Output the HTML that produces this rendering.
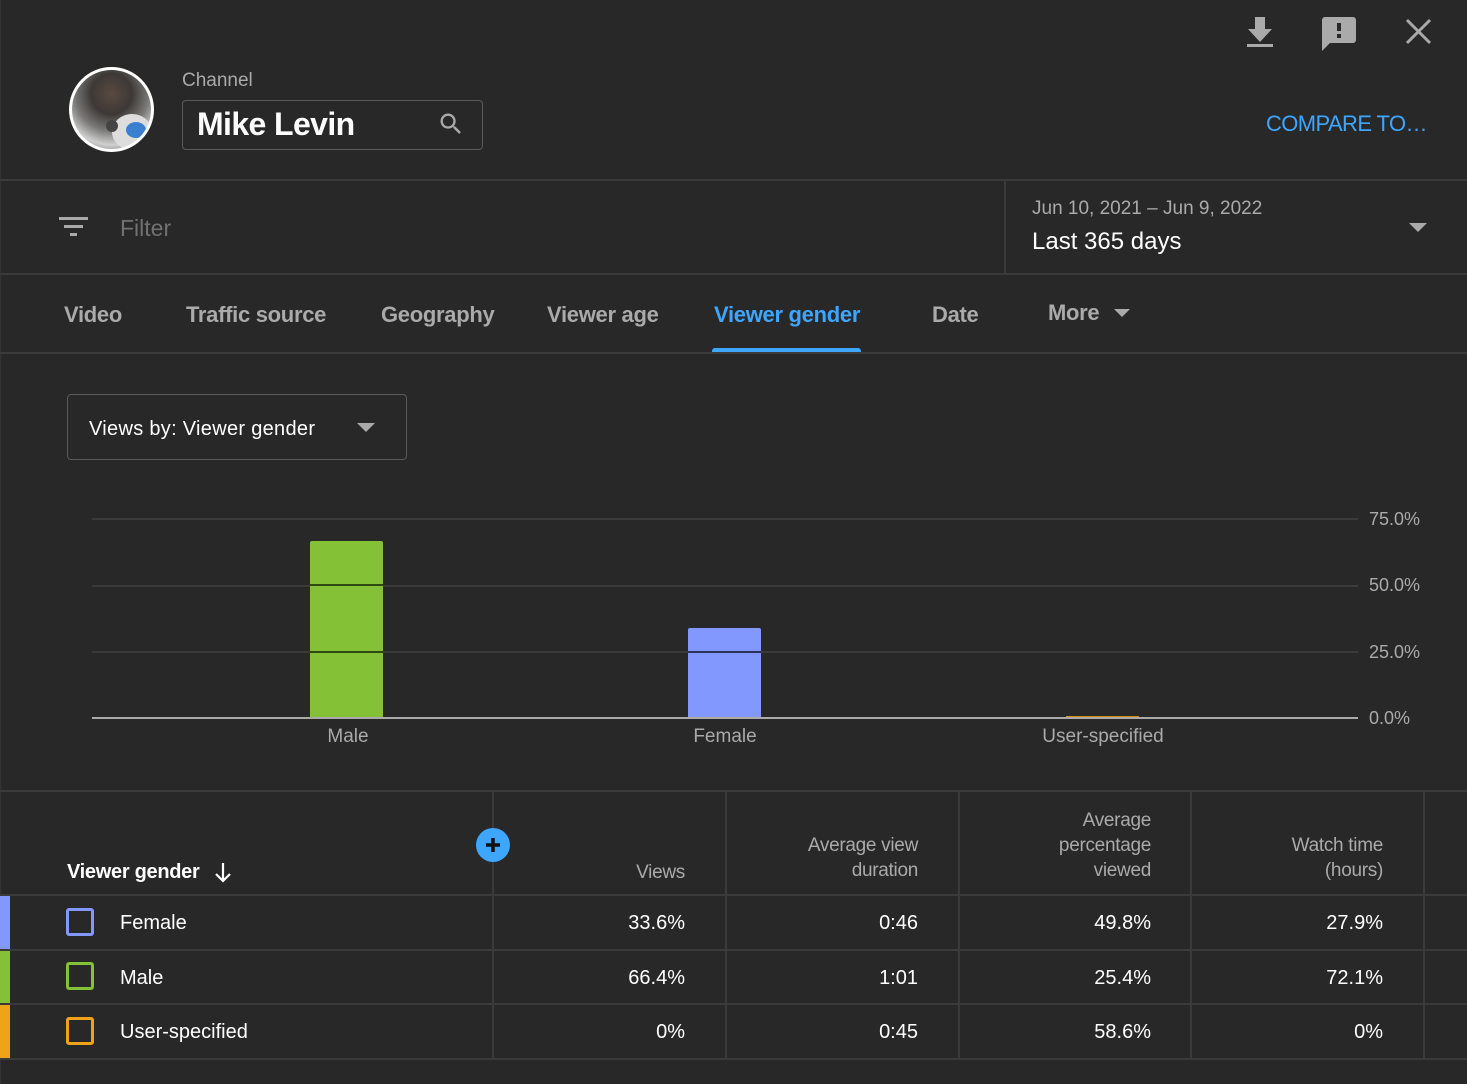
<!DOCTYPE html>
<html><head><meta charset="utf-8">
<style>
*{margin:0;padding:0;box-sizing:border-box}
body{width:1467px;height:1084px;background:#282828;font-family:"Liberation Sans",Arial,sans-serif;position:relative;overflow:hidden;color:#fff}
.a{position:absolute;white-space:nowrap}
.hl{position:absolute;height:2px;background:#3a3a3a}
.vl{position:absolute;width:2px;background:#3a3a3a}
.tab{position:absolute;top:302px;font-size:22px;color:#aaa;font-weight:bold;letter-spacing:-0.3px}
.grid{position:absolute;left:92px;width:1266px;height:2px;background:#3a3a3a}
.yl{position:absolute;left:1369px;font-size:18px;color:#aaa}
.xl{position:absolute;top:726px;font-size:19px;color:#aaa;transform:translateX(-50%)}
.th{position:absolute;font-size:19px;color:#aaa;text-align:right;line-height:25px;letter-spacing:-0.3px}
.td{position:absolute;font-size:20px;color:#fff;text-align:right}
.box{position:absolute;left:66px;width:28px;height:28px;border:3px solid;border-radius:3px}
</style></head><body>
<div class="vl" style="left:0;top:0;height:1084px;background:#333;width:1px"></div>

<!-- avatar -->
<div class="a" style="left:69px;top:67px;width:85px;height:85px;border-radius:50%;border:3px solid #fff;background:radial-gradient(circle at 50% 30%,#5a4a40 0,#3d3836 30%,#7a7a78 55%,#cfcfcf 75%,#555 100%);overflow:hidden">
<div class="a" style="left:40px;top:44px;width:40px;height:36px;border-radius:50%;background:#ddd"></div>
<div class="a" style="left:54px;top:52px;width:20px;height:16px;border-radius:50%;background:#3a7fd0"></div>
<div class="a" style="left:34px;top:50px;width:12px;height:12px;border-radius:50%;background:#444"></div>
</div>
<div class="a" style="left:182px;top:70px;font-size:19px;color:#aaa">Channel</div>
<div class="a" style="left:182px;top:100px;width:301px;height:50px;border:1px solid #5a5a5a;border-radius:4px"></div>
<div class="a" style="left:197px;top:106px;font-size:32px;font-weight:bold;color:#fff;letter-spacing:-0.6px">Mike Levin</div>
<svg class="a" style="left:437px;top:110px" width="28" height="28" viewBox="0 0 24 24"><path fill="#aaa" d="M15.5 14h-.79l-.28-.27A6.47 6.47 0 0 0 16 9.5 6.5 6.5 0 1 0 9.5 16c1.61 0 3.09-.59 4.23-1.57l.27.28v.79l5 4.99L20.49 19l-4.99-5zm-6 0C7.01 14 5 11.99 5 9.5S7.01 5 9.5 5 14 7.01 14 9.5 11.99 14 9.5 14z"/></svg>

<!-- top icons -->
<svg class="a" style="left:1245px;top:15px" width="30" height="34" viewBox="0 0 30 34"><path fill="#aaa" d="M10 2h10v12h7L15 27 3 14h7z"/><rect x="2" y="29" width="26" height="3" fill="#aaa"/></svg>
<svg class="a" style="left:1321px;top:16px" width="36" height="36" viewBox="0 0 36 36"><path fill="#aaa" d="M4 1h28a3 3 0 0 1 3 3v20a3 3 0 0 1-3 3H9l-8 8V4a3 3 0 0 1 3-3z"/><rect x="16" y="7" width="4" height="8" fill="#282828"/><rect x="16" y="18" width="4" height="4" fill="#282828"/></svg>
<svg class="a" style="left:1405px;top:18px" width="27" height="27" viewBox="0 0 27 27"><path stroke="#aaa" stroke-width="3" d="M2 2L25 25M25 2L2 25"/></svg>
<div class="a" style="left:1266px;top:111px;font-size:22px;color:#3ea6ff;letter-spacing:-0.6px">COMPARE TO…</div>

<div class="hl" style="left:0;top:179px;width:1467px"></div>
<!-- filter -->
<svg class="a" style="left:58px;top:217px" width="32" height="22" viewBox="0 0 32 22"><rect x="1" y="0" width="29" height="3" fill="#aaa"/><rect x="6" y="8" width="19" height="3" fill="#aaa"/><rect x="12" y="16" width="7" height="3" fill="#aaa"/></svg>
<div class="a" style="left:120px;top:215px;font-size:23px;color:#717171">Filter</div>
<div class="vl" style="left:1004px;top:181px;height:93px"></div>
<div class="a" style="left:1032px;top:198px;font-size:19px;color:#aaa">Jun 10, 2021 – Jun 9, 2022</div>
<div class="a" style="left:1032px;top:228px;font-size:24px;color:#fff">Last 365 days</div>
<svg class="a" style="left:1409px;top:223px" width="18" height="10"><path d="M0 0h18L9 9z" fill="#aaa"/></svg>
<div class="hl" style="left:0;top:273px;width:1467px"></div>

<!-- tabs -->
<div class="tab" style="left:64px">Video</div>
<div class="tab" style="left:186px">Traffic source</div>
<div class="tab" style="left:381px">Geography</div>
<div class="tab" style="left:547px">Viewer age</div>
<div class="tab" style="left:714px;color:#3ea6ff">Viewer gender</div>
<div class="tab" style="left:932px">Date</div>
<div class="tab" style="left:1048px;top:300px">More</div>
<svg class="a" style="left:1114px;top:309px" width="16" height="9"><path d="M0 0h16L8 8z" fill="#aaa"/></svg>
<div class="a" style="left:712px;top:348px;width:149px;height:5px;background:#3ea6ff;border-radius:3px 3px 0 0"></div>
<div class="hl" style="left:0;top:352px;width:1467px"></div>

<!-- dropdown -->
<div class="a" style="left:67px;top:394px;width:340px;height:66px;border:1px solid #5a5a5a;border-radius:4px"></div>
<div class="a" style="left:89px;top:418px;font-size:20px;color:#fff;letter-spacing:0.3px">Views by: Viewer gender</div>
<svg class="a" style="left:357px;top:423px" width="18" height="10"><path d="M0 0h18L9 9z" fill="#aaa"/></svg>

<!-- chart -->
<div class="grid" style="top:518px"></div>
<div class="grid" style="top:585px"></div>
<div class="grid" style="top:651px"></div>
<div class="a" style="left:310px;top:541px;width:73px;height:178px;background:#84c136;border-radius:2px 2px 0 0"></div>
<div class="a" style="left:688px;top:628px;width:73px;height:91px;background:#8398ff;border-radius:2px 2px 0 0"></div>
<div class="a" style="left:310px;top:584px;width:73px;height:2px;background:#2d4a12"></div>
<div class="a" style="left:310px;top:651px;width:73px;height:2px;background:#2d4a12"></div>
<div class="a" style="left:688px;top:651px;width:73px;height:2px;background:#2a3260"></div>
<div class="a" style="left:1066px;top:716px;width:73px;height:2px;background:#d4900a"></div>
<div class="grid" style="top:717px;background:#aaa"></div>
<div class="yl" style="top:509px">75.0%</div>
<div class="yl" style="top:575px">50.0%</div>
<div class="yl" style="top:642px">25.0%</div>
<div class="yl" style="top:708px">0.0%</div>
<div class="xl" style="left:348px">Male</div>
<div class="xl" style="left:725px">Female</div>
<div class="xl" style="left:1103px">User-specified</div>

<!-- table -->
<div class="hl" style="left:0;top:790px;width:1467px"></div>
<div class="hl" style="left:0;top:894px;width:1467px"></div>
<div class="hl" style="left:0;top:949px;width:1467px"></div>
<div class="hl" style="left:0;top:1003px;width:1467px"></div>
<div class="hl" style="left:0;top:1058px;width:1467px"></div>
<div class="vl" style="left:492px;top:792px;height:266px"></div>
<div class="vl" style="left:725px;top:792px;height:266px"></div>
<div class="vl" style="left:958px;top:792px;height:266px"></div>
<div class="vl" style="left:1190px;top:792px;height:266px"></div>
<div class="vl" style="left:1423px;top:792px;height:266px"></div>

<div class="a" style="left:67px;top:861px;font-size:20px;font-weight:bold;color:#fff;letter-spacing:-0.3px">Viewer gender</div>
<svg class="a" style="left:213px;top:862px" width="20" height="22" viewBox="0 0 20 22"><path d="M10 1v18M3 12l7 7 7-7" stroke="#fff" stroke-width="2.2" fill="none"/></svg>
<div class="a" style="left:476px;top:828px;width:34px;height:34px;border-radius:50%;background:#3ea6ff"></div>
<svg class="a" style="left:483px;top:835px" width="20" height="20"><path d="M10 3v14M3 10h14" stroke="#111" stroke-width="3.5"/></svg>

<div class="th" style="right:782px;top:860px">Views</div>
<div class="th" style="right:549px;top:833px">Average view<br>duration</div>
<div class="th" style="right:316px;top:808px">Average<br>percentage<br>viewed</div>
<div class="th" style="right:84px;top:833px">Watch time<br>(hours)</div>

<div class="a" style="left:0;top:896px;width:10px;height:53px;background:#8398ff"></div>
<div class="a" style="left:0;top:951px;width:10px;height:52px;background:#84c136"></div>
<div class="a" style="left:0;top:1005px;width:10px;height:53px;background:#eea319"></div>
<div class="box" style="top:908px;border-color:#8398ff"></div>
<div class="box" style="top:962px;border-color:#84c136"></div>
<div class="box" style="top:1017px;border-color:#eea319"></div>
<div class="a" style="left:120px;top:912px;font-size:20px">Female</div>
<div class="a" style="left:120px;top:967px;font-size:20px">Male</div>
<div class="a" style="left:120px;top:1021px;font-size:20px">User-specified</div>

<div class="td" style="right:782px;top:912px">33.6%</div>
<div class="td" style="right:549px;top:912px">0:46</div>
<div class="td" style="right:316px;top:912px">49.8%</div>
<div class="td" style="right:84px;top:912px">27.9%</div>
<div class="td" style="right:782px;top:967px">66.4%</div>
<div class="td" style="right:549px;top:967px">1:01</div>
<div class="td" style="right:316px;top:967px">25.4%</div>
<div class="td" style="right:84px;top:967px">72.1%</div>
<div class="td" style="right:782px;top:1021px">0%</div>
<div class="td" style="right:549px;top:1021px">0:45</div>
<div class="td" style="right:316px;top:1021px">58.6%</div>
<div class="td" style="right:84px;top:1021px">0%</div>
</body></html>
